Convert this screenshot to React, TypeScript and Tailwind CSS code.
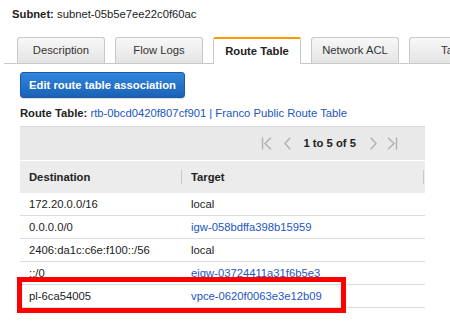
import React from "react";

type Route = {
  destination: string;
  target: string;
  link?: boolean;
};

const routes: Route[] = [
  { destination: "172.20.0.0/16", target: "local" },
  { destination: "0.0.0.0/0", target: "igw-058bdffa398b15959", link: true },
  { destination: "2406:da1c:c6e:f100::/56", target: "local" },
  { destination: "::/0", target: "eigw-03724411a31f6b5e3", link: true },
  { destination: "pl-6ca54005", target: "vpce-0620f0063e3e12b09", link: true },
];

const tabs = ["Description", "Flow Logs", "Route Table", "Network ACL", "Tags"];

function FirstIcon() {
  return (
    <svg width="11" height="13" viewBox="0 0 11 13" fill="none" stroke="#b0b0b0" strokeWidth="1.4">
      <path d="M1.5 0.5 V12.5" />
      <path d="M10 0.8 L4 6.5 L10 12.2" />
    </svg>
  );
}

function PrevIcon() {
  return (
    <svg width="7" height="13" viewBox="0 0 7 13" fill="none" stroke="#b0b0b0" strokeWidth="1.4">
      <path d="M6.2 0.8 L1 6.5 L6.2 12.2" />
    </svg>
  );
}

function NextIcon() {
  return (
    <svg width="7" height="13" viewBox="0 0 7 13" fill="none" stroke="#b0b0b0" strokeWidth="1.4">
      <path d="M0.8 0.8 L6 6.5 L0.8 12.2" />
    </svg>
  );
}

function LastIcon() {
  return (
    <svg width="11" height="13" viewBox="0 0 11 13" fill="none" stroke="#b0b0b0" strokeWidth="1.4">
      <path d="M1 0.8 L7 6.5 L1 12.2" />
      <path d="M9.5 0.5 V12.5" />
    </svg>
  );
}

export default function App() {
  return (
    <div className="relative w-[450px] h-[325px] overflow-hidden bg-white text-[#222] text-[11.25px] font-['Liberation_Sans',Arial,sans-serif]">
      {/* Subnet heading */}
      <div className="pt-[7px] pl-[12px] leading-[14px] whitespace-nowrap">
        <span className="font-bold">Subnet:</span> subnet-05b5e7ee22c0f60ac
      </div>

      {/* Tabs */}
      <div className="mt-[16px] ml-[4px] flex items-end gap-[10px] pl-[13px] border-b border-[#c8c8c8] h-[27px] whitespace-nowrap">
        {tabs.map((t) => {
          const active = t === "Route Table";
          return active ? (
            <div
              key={t}
              className="w-[88px] h-[27px] -mb-px shrink-0 flex items-center justify-center bg-white border-x border-[#c8c8c8] border-t-2 border-t-[#f90] font-bold text-[#222] rounded-t-[2px]"
            >
              {t}
            </div>
          ) : (
            <div
              key={t}
              className="w-[88px] h-[26px] shrink-0 flex items-center justify-center bg-linear-to-b from-[#f8f8f8] to-[#e4e4e4] border border-b-0 border-[#c8c8c8] rounded-t-[3px] text-[#333]"
            >
              {t}
            </div>
          );
        })}
      </div>

      <div className="px-[20px]">
        {/* Action button */}
        <button className="mt-[8px] w-[165px] h-[26px] rounded-[3px] border border-[#1a5aa8] bg-linear-to-b from-[#3186dc] to-[#1a62b6] text-white font-bold text-[11.25px] flex items-center justify-center shadow-[0_1px_1px_rgba(0,0,0,0.15)]">
          Edit route table association
        </button>

        {/* Route table line */}
        <div className="mt-[8px] leading-[14px] whitespace-nowrap">
          <span className="font-bold">Route Table:</span>{" "}
          <span className="text-[#2156c0]">rtb-0bcd0420f807cf901 | Franco Public Route Table</span>
        </div>

        {/* Table */}
        <div className="mt-[6px] w-[405px]">
          <div className="h-[34px] bg-[#e9e9e9] border-t border-[#dadada] flex items-center justify-end pr-[27px]">
            <FirstIcon />
            <span className="ml-[12px]"><PrevIcon /></span>
            <span className="ml-[12px] font-bold text-[#222]">1 to 5 of 5</span>
            <span className="ml-[14px]"><NextIcon /></span>
            <span className="ml-[10px]"><LastIcon /></span>
          </div>
          <div className="mt-px h-[32px] bg-[#ececec] flex items-center font-bold text-[#222]">
            <div className="w-[162px] pl-[9px] h-full flex items-center border-r-0 relative">
              Destination
              <span className="absolute right-0 top-[9px] h-[14px] w-px bg-[#c8c8c8]" />
            </div>
            <div className="flex-1 pl-[9px] h-full flex items-center relative">
              Target
              <span className="absolute right-px top-[9px] h-[14px] w-px bg-[#c8c8c8]" />
            </div>
          </div>
          {routes.map((r) => (
            <div key={r.destination} className="h-[23px] flex items-center border-b border-[#dcdcdc]">
              <div className="w-[162px] pl-[9px]">{r.destination}</div>
              <div className={`flex-1 pl-[9px] ${r.link ? "text-[#2156c0]" : ""}`}>{r.target}</div>
            </div>
          ))}
        </div>
      </div>

      {/* Highlight box */}
      <div className="absolute left-[17px] top-[277px] w-[329px] h-[36px] border-[5px] border-[#ff0000]" />
    </div>
  );
}
